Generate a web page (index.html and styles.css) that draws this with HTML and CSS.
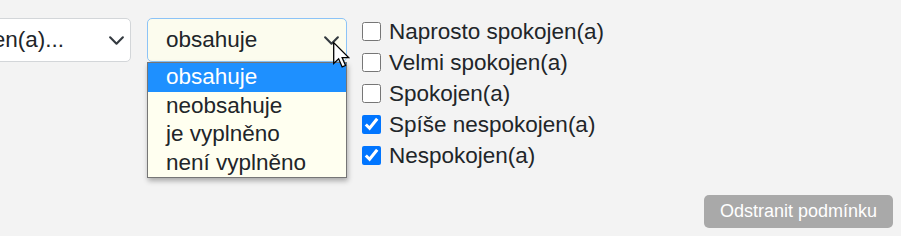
FILE: index.html
```html
<!DOCTYPE html>
<html lang="cs">
<head>
    <meta charset="UTF-8">
    <meta name="viewport" content="width=device-width, initial-scale=1.0">
    <title>Podmínka filtru</title>
    <link rel="stylesheet" href="styles.css">
</head>
<body>
    <div class="page">
        <div class="filter-row">
            <div class="select select-field">
                <span class="select-value">Spokojen(a)...</span>
                <svg class="chevron" viewBox="0 0 16 16"><path d="M2 5l6 6 6-6"/></svg>
            </div>

            <div class="select select-op open">
                <span class="select-value">obsahuje</span>
                <svg class="chevron" viewBox="0 0 16 16"><path d="M2 5l6 6 6-6"/></svg>
                <ul class="options">
                    <li class="selected">obsahuje</li>
                    <li>neobsahuje</li>
                    <li>je vyplněno</li>
                    <li>není vyplněno</li>
                </ul>
                <svg class="cursor" viewBox="0 0 13 20">
                    <path d="M0.5 0.5 L0.5 16.5 L4.3 12.9 L7 19.2 L9.6 18.1 L7 12 L12 12 Z"/>
                </svg>
            </div>

            <ul class="answers">
                <li><label><input type="checkbox"> Naprosto spokojen(a)</label></li>
                <li><label><input type="checkbox"> Velmi spokojen(a)</label></li>
                <li><label><input type="checkbox"> Spokojen(a)</label></li>
                <li><label><input type="checkbox" checked> Spíše nespokojen(a)</label></li>
                <li><label><input type="checkbox" checked> Nespokojen(a)</label></li>
            </ul>
        </div>

        <div class="actions">
            <button class="btn-remove" type="button">Odstranit podmínku</button>
        </div>
    </div>
</body>
</html>
```

FILE: styles.css
```css
body {
    margin: 0;
    padding: 0;
    font-family: 'Liberation Sans', Arial, sans-serif;
    background: #f3f3f3;
    color: #212529;
    overflow: hidden;
}
.page {
    height: 236px;
    display: flex;
    flex-direction: column;
    justify-content: space-between;
}
.filter-row {
    display: flex;
    align-items: flex-start;
    padding-top: 16px;
}
.select {
    position: relative;
    box-sizing: border-box;
    height: 44px;
    margin-top: 2px;
    padding-left: 18px;
    display: flex;
    align-items: center;
    border: 1px solid #d3d6d9;
    border-radius: 5px;
    background: #fff;
    font-size: 22.5px;
}
.select-value {
    white-space: nowrap;
}
.chevron {
    position: absolute;
    top: 13px;
    right: 5px;
    width: 17px;
    height: 17px;
    fill: none;
    stroke: #343a40;
    stroke-width: 2;
    stroke-linecap: round;
    stroke-linejoin: round;
}
.select-field {
    width: 226px;
    margin-left: -95px;
    margin-right: 16px;
}
.select-field .chevron {
    right: 5px;
}
.select-op {
    width: 200px;
    margin-right: 15px;
    background: #fcfcee;
    border-color: #8cc3f7;
}
.select-op .chevron {
    right: 6px;
}
.options {
    position: absolute;
    top: 43px;
    left: -1px;
    width: 200px;
    box-sizing: border-box;
    margin: 0;
    padding: 0;
    list-style: none;
    background: #fffff0;
    border: 1px solid #767676;
    box-shadow: 1px 3px 5px rgba(0, 0, 0, 0.3);
}
.options li {
    height: 28.5px;
    line-height: 28.5px;
    padding-left: 18px;
}
.options li.selected {
    background: #1e90ff;
    color: #fff;
}
.cursor {
    position: absolute;
    top: 23px;
    left: 185px;
    width: 17px;
    height: 26px;
    fill: #fff;
    stroke: #000;
    stroke-width: 1;
    stroke-linejoin: miter;
}
.answers {
    margin: 0;
    padding: 0;
    list-style: none;
    font-size: 22.5px;
}
.answers li {
    height: 31px;
}
.answers label {
    display: flex;
    align-items: center;
    height: 31px;
    gap: 8px;
    white-space: nowrap;
}
.answers input {
    width: 19px;
    height: 19px;
    margin: 0;
}
.actions {
    display: flex;
    justify-content: flex-end;
    padding: 0 8px 8px 0;
}
.btn-remove {
    height: 33px;
    padding: 0 16px;
    border: none;
    border-radius: 5px;
    background: #a9a9a9;
    color: #fff;
    font-family: 'Liberation Sans', Arial, sans-serif;
    font-size: 18px;
}
```
